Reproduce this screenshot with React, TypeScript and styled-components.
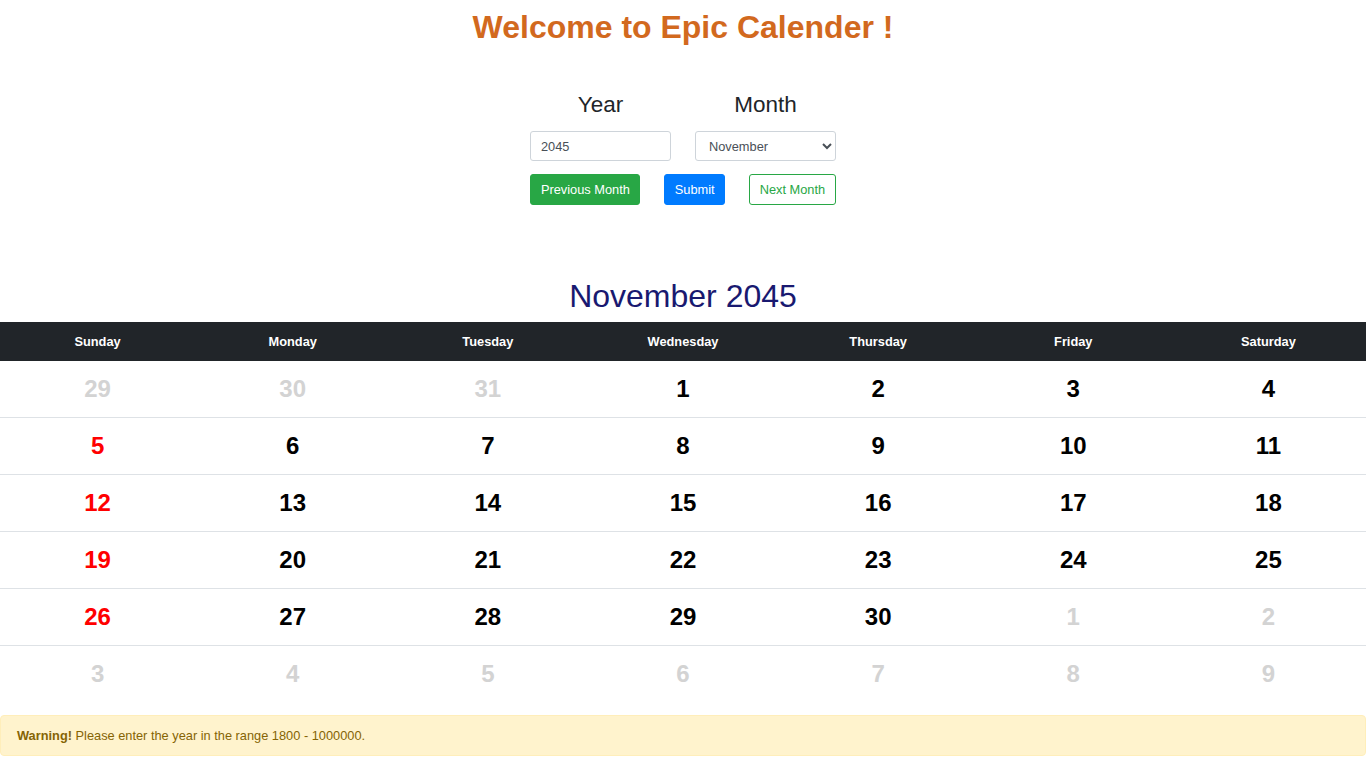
import React from "react";
import styled, { createGlobalStyle } from "styled-components";

const GlobalStyle = createGlobalStyle`
  body {
    margin: 0;
    font-family: "Liberation Sans", Arial, sans-serif;
    color: #212529;
    background: #fff;
  }
`;

const Page = styled.div`
  display: flex;
  flex-direction: column;
  align-items: center;
`;

const Title = styled.h1`
  margin: 8px 0 0;
  font-size: 32px;
  line-height: 38px;
  font-weight: 700;
  color: #d2691e;
`;

const Controls = styled.div`
  margin-top: 45px;
  display: grid;
  grid-template-columns: 141px 141px;
  column-gap: 24px;
`;

const Label = styled.div`
  font-size: 22.5px;
  line-height: 27px;
  text-align: center;
  margin-bottom: 13px;
`;

const Field = styled.input`
  box-sizing: border-box;
  width: 141px;
  height: 30px;
  padding: 0 10px;
  border: 1px solid #ced4da;
  border-radius: 3px;
  font-family: inherit;
  font-size: 12.8px;
  color: #495057;
`;

const Select = styled.select`
  box-sizing: border-box;
  width: 141px;
  height: 30px;
  padding: 0 9px;
  border: 1px solid #ced4da;
  border-radius: 3px;
  background: #fff;
  font-family: inherit;
  font-size: 12.8px;
  color: #495057;
`;

const ButtonRow = styled.div`
  display: flex;
  gap: 24px;
  margin-top: 13px;
`;

const Btn = styled.button<{ $variant: "green" | "blue" | "outline" }>`
  box-sizing: border-box;
  height: 31px;
  padding: 0 9.5px;
  border-radius: 3px;
  font-family: inherit;
  font-size: 12.8px;
  border: 1px solid
    ${(p) => (p.$variant === "blue" ? "#007bff" : "#28a745")};
  background: ${(p) =>
    p.$variant === "green" ? "#28a745" : p.$variant === "blue" ? "#007bff" : "#fff"};
  color: ${(p) => (p.$variant === "outline" ? "#28a745" : "#fff")};
`;

const MonthTitle = styled.h2`
  margin: 73px 0 0;
  font-size: 32px;
  line-height: 37px;
  font-weight: 400;
  color: #191970;
`;

const Calendar = styled.div`
  width: 100%;
  margin-top: 7px;
`;

const Row = styled.div`
  display: grid;
  grid-template-columns: repeat(7, 1fr);
`;

const HeadRow = styled(Row)`
  background: #212529;
  height: 39px;
  align-items: center;
`;

const HeadCell = styled.div`
  text-align: center;
  color: #fff;
  font-size: 12.8px;
  font-weight: 700;
`;

const WeekRow = styled(Row)`
  height: 56px;
  align-items: center;
  & + & {
    border-top: 1px solid #dee2e6;
  }
`;

const DayCell = styled.div<{ $kind: "muted" | "sunday" | "normal" }>`
  text-align: center;
  font-size: 24px;
  font-weight: 700;
  color: ${(p) =>
    p.$kind === "muted" ? "#d3d3d3" : p.$kind === "sunday" ? "#ff0000" : "#000"};
`;

const Alert = styled.div`
  box-sizing: border-box;
  width: 100%;
  margin-top: 13px;
  padding: 11px 16px;
  background: #fff3cd;
  border: 1px solid #ffeeba;
  border-radius: 4px;
  color: #856404;
  font-size: 12.8px;
  line-height: 17px;
`;

const days = ["Sunday", "Monday", "Tuesday", "Wednesday", "Thursday", "Friday", "Saturday"];

const months = [
  "January", "February", "March", "April", "May", "June",
  "July", "August", "September", "October", "November", "December",
];

type Cell = { n: number; cur: boolean };

const buildWeeks = (): Cell[][] => {
  const cells: Cell[] = [];
  [29, 30, 31].forEach((n) => cells.push({ n, cur: false }));
  for (let i = 1; i <= 30; i++) cells.push({ n: i, cur: true });
  let next = 1;
  while (cells.length < 42) cells.push({ n: next++, cur: false });
  const weeks: Cell[][] = [];
  for (let i = 0; i < 42; i += 7) weeks.push(cells.slice(i, i + 7));
  return weeks;
};

const App = () => {
  const weeks = buildWeeks();
  return (
    <>
      <GlobalStyle />
      <Page>
        <Title>Welcome to Epic Calender !</Title>
        <Controls>
          <div>
            <Label>Year</Label>
            <Field defaultValue="2045" />
          </div>
          <div>
            <Label>Month</Label>
            <Select defaultValue="November">
              {months.map((m) => (
                <option key={m}>{m}</option>
              ))}
            </Select>
          </div>
        </Controls>
        <ButtonRow>
          <Btn $variant="green">Previous Month</Btn>
          <Btn $variant="blue">Submit</Btn>
          <Btn $variant="outline">Next Month</Btn>
        </ButtonRow>
        <MonthTitle>November 2045</MonthTitle>
        <Calendar>
          <HeadRow>
            {days.map((d) => (
              <HeadCell key={d}>{d}</HeadCell>
            ))}
          </HeadRow>
          {weeks.map((w, i) => (
            <WeekRow key={i}>
              {w.map((c, j) => (
                <DayCell
                  key={j}
                  $kind={!c.cur ? "muted" : j === 0 ? "sunday" : "normal"}
                >
                  {c.n}
                </DayCell>
              ))}
            </WeekRow>
          ))}
        </Calendar>
        <Alert>
          <strong>Warning!</strong> Please enter the year in the range 1800 - 1000000.
        </Alert>
      </Page>
    </>
  );
};

export default App;
